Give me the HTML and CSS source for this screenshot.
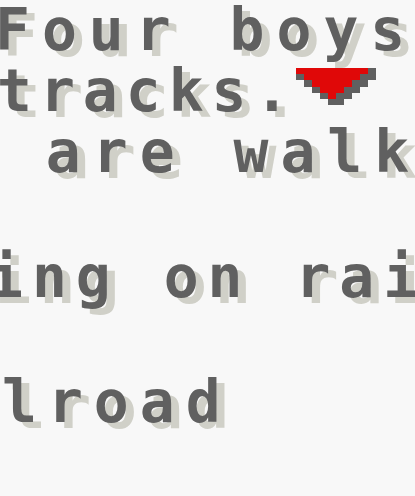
FILE: index.html
```html
<!DOCTYPE html>
<html>
<head>
<meta charset="utf-8">
<link rel="stylesheet" href="styles.css">
</head>
<body>
<div class="screen">
  <div class="line l1">Four boys</div>
  <div class="line l2">tracks.<svg class="cursor" viewBox="0 0 10 6" preserveAspectRatio="none" shape-rendering="crispEdges" aria-hidden="true">
      <path fill="#606060" d="M9 0h1v1h-1z M0 1h1v1h-1z M8 1h2v1h-2z M1 2h1v1h-1z M7 2h2v1h-2z M2 3h1v1h-1z M6 3h2v1h-2z M3 4h1v1h-1z M5 4h2v1h-2z M4 5h2v1h-2z"/>
      <path fill="#e00808" d="M0 0h9v1h-1v1h-1v1h-1v1h-1v1h-1v-1h-1v-1h-1v-1h-1v-1h-1z"/>
    </svg></div>
  <div class="line l3">s are walk</div>
  <div class="line l4 gap">ing on rai</div>
  <div class="line l5 gap">lroad</div>
</div>
</body>
</html>
```

FILE: styles.css
```css
html, body {
  margin: 0;
  padding: 0;
  background: #f8f8f8;
  overflow: hidden;
}

.screen {
  width: 415px;
  height: 496px;
  overflow: hidden;
  font-family: "DejaVu Sans Mono", monospace;
  font-weight: bold;
  font-size: 58px;
  color: #606060;
  text-shadow: 8px 6px 0 #d0d0c8;
}

.line {
  height: 61px;
  line-height: 61px;
  white-space: pre;
  position: relative;
}

.gap {
  margin-top: 64px;
}

.l1 {
  margin-left: -5px;
  letter-spacing: 12px;
}

.l2 {
  margin-left: -3px;
  letter-spacing: 8px;
}

.l3 {
  margin-left: -48px;
  letter-spacing: 12px;
}

.l4 {
  margin-left: -12px;
  letter-spacing: 9px;
}

.l5 {
  margin-left: 2px;
  letter-spacing: 11px;
}

.cursor {
  position: absolute;
  left: 299px;
  top: 7px;
  width: 80px;
  height: 37px;
}
```
